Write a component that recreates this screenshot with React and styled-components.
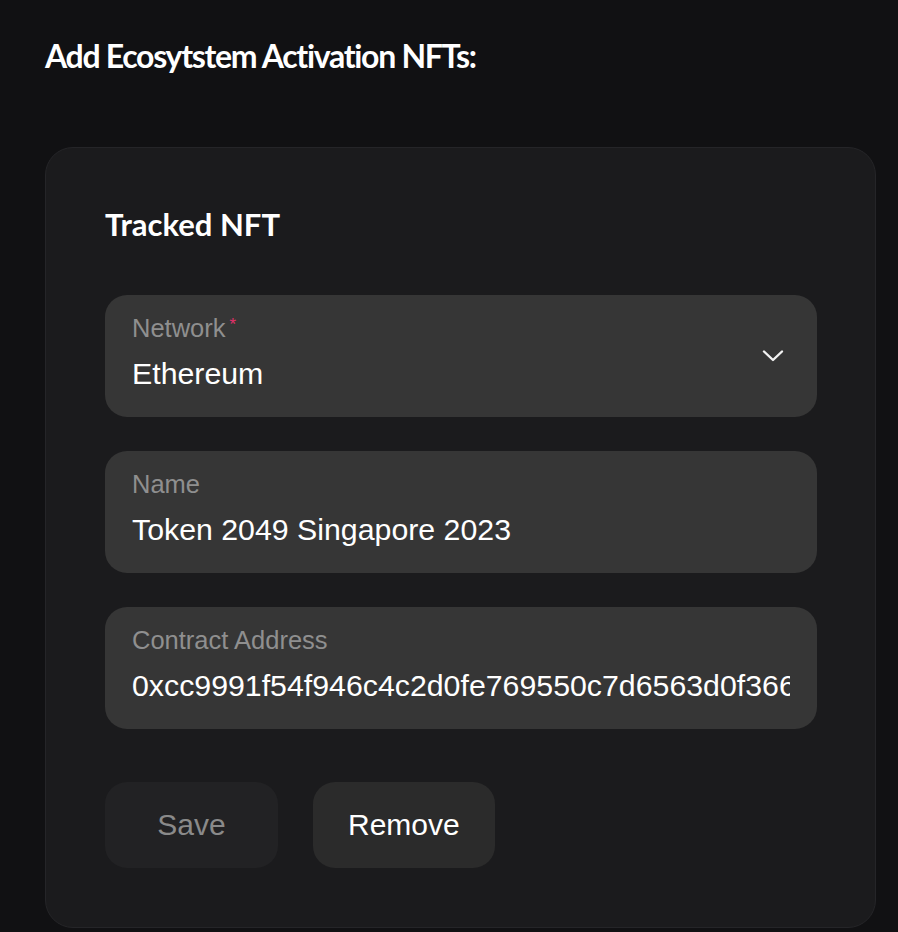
import React from "react";
import styled, { createGlobalStyle } from "styled-components";

const GlobalStyle = createGlobalStyle`
  html, body {
    margin: 0;
    padding: 0;
    background: #111113;
  }
  * {
    box-sizing: border-box;
  }
`;

const Page = styled.div`
  min-height: 932px;
  padding: 34px 22px 0 45px;
  background: #111113;
`;

const Heading = styled.h1`
  margin: 0;
  font-family: Lato, "Noto Sans", sans-serif;
  font-weight: 700;
  font-size: 32px;
  line-height: 44px;
  letter-spacing: -1.3px;
  color: #ffffff;
`;

const Card = styled.div`
  margin-top: 69px;
  padding: 56px 58px 59px 59px;
  background: #1b1b1d;
  border: 1px solid #252528;
  border-radius: 28px;
`;

const CardTitle = styled.h2`
  margin: 0 0 51px;
  font-family: Lato, "Noto Sans", sans-serif;
  font-weight: 700;
  font-size: 31px;
  line-height: 40px;
  color: #ffffff;
`;

const Fields = styled.div`
  display: flex;
  flex-direction: column;
  gap: 34px;
`;

const Field = styled.label`
  display: flex;
  align-items: center;
  height: 122px;
  padding: 0 27px;
  background: #363636;
  border-radius: 22px;
`;

const FieldBody = styled.div`
  flex: 1;
  min-width: 0;
  display: flex;
  flex-direction: column;
  gap: 12px;
  padding-bottom: 6px;
`;

const Label = styled.span`
  display: flex;
  align-items: flex-start;
  font-family: "Liberation Sans", Arial, sans-serif;
  font-size: 25.5px;
  line-height: 30px;
  color: #8f8f8f;
`;

const Required = styled.span`
  margin: 3px 0 0 4px;
  font-size: 17px;
  line-height: 17px;
  color: #e3306a;
`;

const Value = styled.div`
  font-family: "Liberation Sans", Arial, sans-serif;
  font-size: 30.3px;
  line-height: 38px;
  color: #ffffff;
  white-space: nowrap;
  overflow: hidden;
`;

const Chevron = styled.svg`
  flex: none;
  width: 22px;
  height: 14px;
  margin-right: 6px;
`;

const Actions = styled.div`
  display: flex;
  gap: 35px;
  margin-top: 53px;
`;

const Button = styled.button`
  min-width: 173px;
  height: 86px;
  padding: 0 35px;
  border: none;
  border-radius: 22px;
  background: ${(p) => (p.disabled ? "#222224" : "#2b2b2b")};
  color: ${(p) => (p.disabled ? "#8a8a8a" : "#ffffff")};
  font-family: "Liberation Sans", Arial, sans-serif;
  font-size: 30px;
  cursor: ${(p) => (p.disabled ? "default" : "pointer")};
`;

export default function App() {
  return (
    <>
      <GlobalStyle />
      <Page>
        <Heading>Add Ecosytstem Activation NFTs:</Heading>
        <Card>
          <CardTitle>Tracked NFT</CardTitle>
          <Fields>
            <Field>
              <FieldBody>
                <Label>
                  Network<Required>*</Required>
                </Label>
                <Value>Ethereum</Value>
              </FieldBody>
              <Chevron viewBox="0 0 22 14" fill="none">
                <path
                  d="M2 2.5 L11 11 L20 2.5"
                  stroke="#f2f2f2"
                  strokeWidth="2.4"
                  strokeLinecap="round"
                  strokeLinejoin="round"
                />
              </Chevron>
            </Field>
            <Field>
              <FieldBody>
                <Label>Name</Label>
                <Value>Token 2049 Singapore 2023</Value>
              </FieldBody>
            </Field>
            <Field>
              <FieldBody>
                <Label>Contract Address</Label>
                <Value>0xcc9991f54f946c4c2d0fe769550c7d6563d0f366</Value>
              </FieldBody>
            </Field>
          </Fields>
          <Actions>
            <Button disabled>Save</Button>
            <Button>Remove</Button>
          </Actions>
        </Card>
      </Page>
    </>
  );
}
